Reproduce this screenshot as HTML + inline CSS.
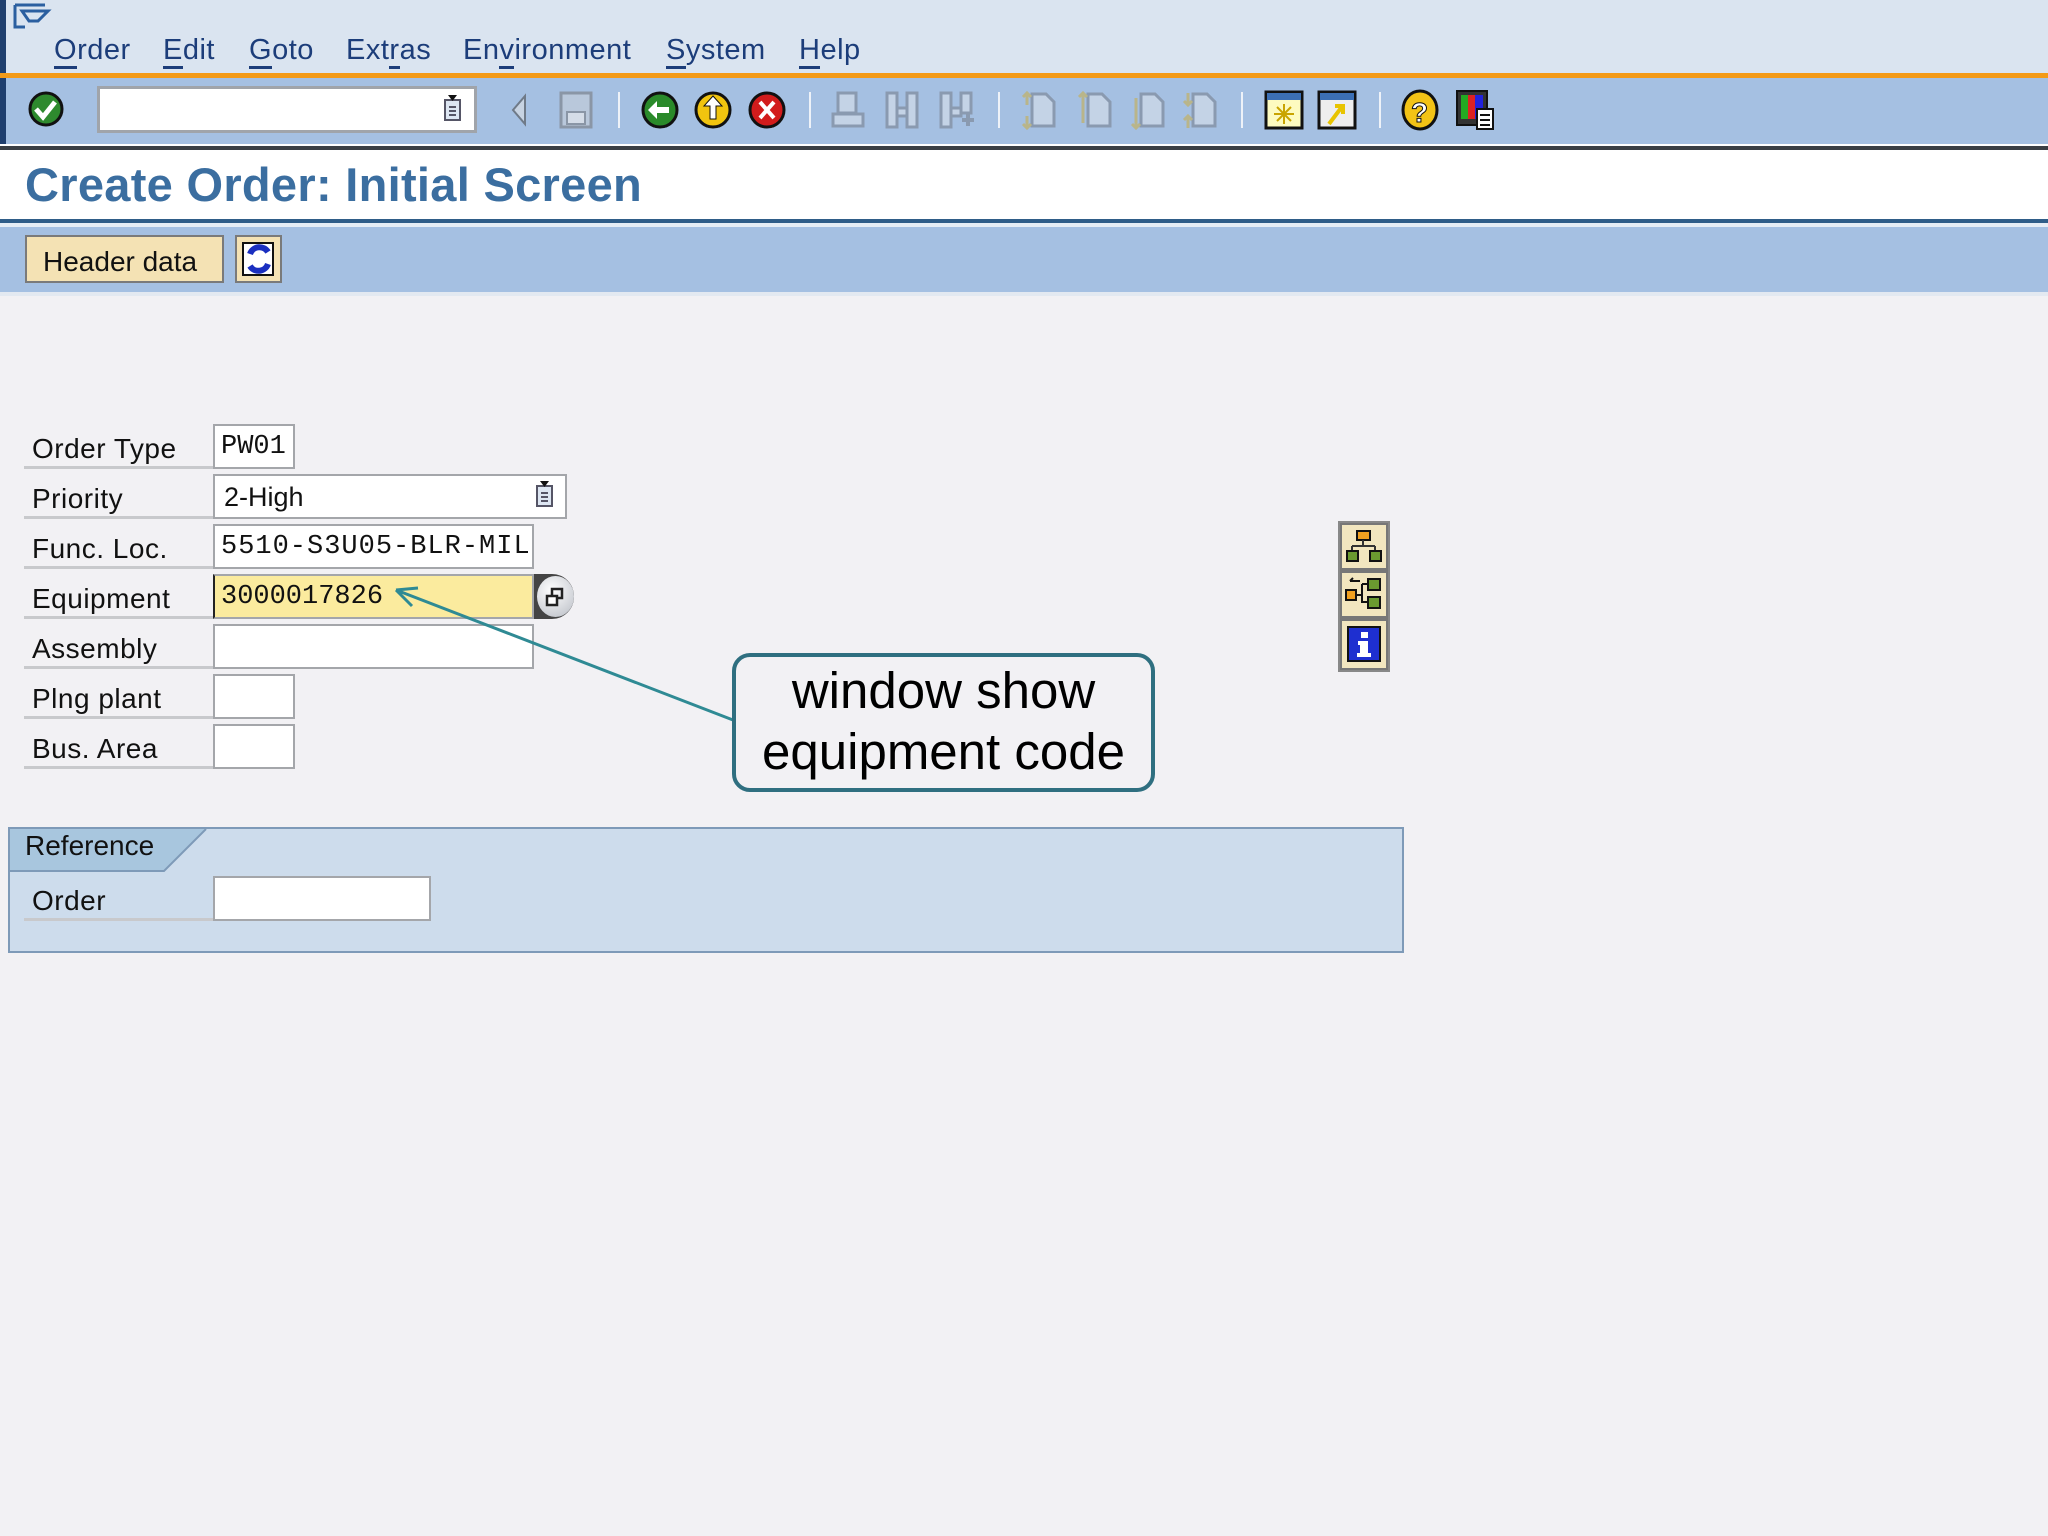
<!DOCTYPE html>
<html><head><meta charset="utf-8"><style>
*{margin:0;padding:0;box-sizing:border-box}
body{width:2048px;height:1536px;background:#f2f1f4;position:relative;overflow:hidden;font-family:"Liberation Sans",sans-serif}
.a{position:absolute}
.menu span{position:absolute;top:34px;font-size:29px;color:#1c3d7a;letter-spacing:0.5px}
.menu span u{text-decoration:none;border-bottom:3px solid #1c3d7a}
.lbl{position:absolute;left:24px;width:190px;height:45px;border-bottom:3px solid #c8c9cc;font-size:28px;color:#111;padding:9px 0 0 8px;letter-spacing:0.5px}
.inp{position:absolute;left:213px;height:45px;background:#fff;border:2px solid #a4a6aa;font-family:"Liberation Mono",monospace;font-size:27px;color:#111;padding:6px 0 0 6px}
.sep{position:absolute;top:92px;width:2px;height:36px;background:#eef2f8}
</style></head><body>
<div class="a" style="left:0;top:0;width:2048px;height:74px;background:#dae4f0"></div>
<div class="a" style="left:0;top:0;width:6px;height:148px;background:#1f3f6e"></div>
<svg class="a" style="left:12px;top:2px" width="42" height="28"><path d="M3 3h30M3 3v22h10M10 9h26l-10 10h-9z" fill="none" stroke="#2b5fa0" stroke-width="3"/></svg>
<div class="menu">
<span style="left:54px"><u>O</u>rder</span>
<span style="left:163px"><u>E</u>dit</span>
<span style="left:249px"><u>G</u>oto</span>
<span style="left:346px">Ext<u>r</u>as</span>
<span style="left:463px">En<u>v</u>ironment</span>
<span style="left:666px"><u>S</u>ystem</span>
<span style="left:799px"><u>H</u>elp</span>
</div>
<div class="a" style="left:0;top:73px;width:2048px;height:5px;background:#f39a17"></div>
<div class="a" style="left:6px;top:78px;width:2042px;height:66px;background:#a5c0e2"></div>
<div class="a" style="left:0;top:144px;width:2048px;height:2px;background:#fff"></div>
<div class="a" style="left:0;top:146px;width:2048px;height:4px;background:#3a3f45"></div>
<svg class="a" style="left:26px;top:90px" width="44" height="40"><circle cx="20" cy="19" r="16" fill="#2e8a2e" stroke="#111" stroke-width="3"/><path d="M10 19l7 8 12-15" fill="none" stroke="#fff" stroke-width="5"/></svg>
<div class="a" style="left:97px;top:86px;width:380px;height:47px;background:#fff;border:3px solid #a0a4aa"></div>
<svg class="a" style="left:442px;top:94px" width="22" height="30"><rect x="3" y="6" width="15" height="20" fill="#dde6f2" stroke="#556" stroke-width="2"/><path d="M6 1h9l-4.5 6z" fill="#111"/><path d="M7 13h7M7 17h7M7 21h7" stroke="#556" stroke-width="2"/></svg>
<svg class="a" style="left:510px;top:92px" width="20" height="36"><path d="M15 4v28L3 18z" fill="#c7d3e2" stroke="#6f7a88" stroke-width="2"/></svg>
<svg class="a" style="left:558px;top:90px" width="36" height="40"><rect x="3" y="3" width="30" height="34" fill="#b9c8db" stroke="#8a96a6" stroke-width="3"/><rect x="9" y="22" width="18" height="12" fill="#d5dde8" stroke="#8a96a6" stroke-width="2"/></svg>
<div class="sep" style="left:618px"></div>
<svg class="a" style="left:640px;top:89px" width="40" height="42"><circle cx="20" cy="21" r="17" fill="#2a8a2a" stroke="#111" stroke-width="3"/><path d="M8 21l9-9v6h12v6H17v6z" fill="#fff"/></svg>
<svg class="a" style="left:693px;top:89px" width="40" height="42"><circle cx="20" cy="21" r="17" fill="#f1c40f" stroke="#111" stroke-width="3"/><path d="M20 7l9 10h-6v13h-6V17h-6z" fill="#fff" stroke="#111" stroke-width="1"/></svg>
<svg class="a" style="left:747px;top:89px" width="40" height="42"><circle cx="20" cy="21" r="17" fill="#d21c1c" stroke="#111" stroke-width="3"/><path d="M13 13l14 16M27 13L13 29" stroke="#fff" stroke-width="4"/></svg>
<div class="sep" style="left:809px"></div>
<svg class="a" style="left:830px;top:90px" width="36" height="40"><path d="M8 3h18v20H8zM3 24h30v12H3z" fill="#c4d3e6" stroke="#8a9ab0" stroke-width="3"/></svg>
<svg class="a" style="left:884px;top:90px" width="36" height="40"><path d="M3 3h10v34H3zM23 3h10v34H23zM13 18h10v8H13z" fill="#c4d3e6" stroke="#8a9ab0" stroke-width="3"/></svg>
<svg class="a" style="left:938px;top:90px" width="40" height="40"><path d="M3 3h10v34H3zM23 3h10v20H23zM13 18h10v8H13z" fill="#c4d3e6" stroke="#8a9ab0" stroke-width="3"/><path d="M30 24v12M24 30h12" stroke="#8a9ab0" stroke-width="4"/></svg>
<div class="sep" style="left:998px"></div>
<svg class="a" style="left:1020px;top:90px" width="38" height="40"><path d="M12 4h14l8 8v24H12z" fill="#c4d3e6" stroke="#8a9ab0" stroke-width="3"/><path d="M7 3v12M3 7l4-4 4 4M7 26v12M3 34l4 4 4-4" stroke="#b9b58a" stroke-width="3" fill="none"/></svg>
<svg class="a" style="left:1076px;top:90px" width="38" height="40"><path d="M12 4h14l8 8v24H12z" fill="#c4d3e6" stroke="#8a9ab0" stroke-width="3"/><path d="M7 3v30M3 7l4-4 4 4" stroke="#b9b58a" stroke-width="3" fill="none"/></svg>
<svg class="a" style="left:1129px;top:90px" width="38" height="40"><path d="M12 4h14l8 8v24H12z" fill="#c4d3e6" stroke="#8a9ab0" stroke-width="3"/><path d="M7 8v30M3 34l4 4 4-4" stroke="#b9b58a" stroke-width="3" fill="none"/></svg>
<svg class="a" style="left:1181px;top:90px" width="38" height="40"><path d="M12 4h14l8 8v24H12z" fill="#c4d3e6" stroke="#8a9ab0" stroke-width="3"/><path d="M7 3v12M3 11l4 4 4-4M7 26v12M3 30l4-4 4 4" stroke="#b9b58a" stroke-width="3" fill="none"/></svg>
<div class="sep" style="left:1241px"></div>
<svg class="a" style="left:1264px;top:90px" width="40" height="40"><rect x="2" y="2" width="36" height="36" fill="#fdfbc0" stroke="#111" stroke-width="3"/><rect x="3" y="3" width="34" height="7" fill="#3c6fb4"/><path d="M20 14v20M10 24h20M13 17l14 14M27 17L13 31" stroke="#c9a400" stroke-width="2"/></svg>
<svg class="a" style="left:1317px;top:90px" width="40" height="40"><rect x="2" y="2" width="36" height="36" fill="#eee" stroke="#111" stroke-width="3"/><rect x="3" y="3" width="34" height="7" fill="#3c6fb4"/><path d="M12 34l12-16M18 16h8v8" stroke="#e8c400" stroke-width="4" fill="none"/></svg>
<div class="sep" style="left:1379px"></div>
<svg class="a" style="left:1400px;top:88px" width="40" height="44"><ellipse cx="20" cy="22" rx="17" ry="19" fill="#f3c316" stroke="#111" stroke-width="3"/><text x="11" y="34" font-size="28" font-weight="bold" font-family="Liberation Sans" fill="#fff" stroke="#111" stroke-width="1">?</text></svg>
<svg class="a" style="left:1455px;top:89px" width="40" height="42"><rect x="2" y="2" width="30" height="34" fill="#333" stroke="#111" stroke-width="2"/><rect x="6" y="6" width="7" height="24" fill="#2a2"/><rect x="13" y="6" width="7" height="24" fill="#d22"/><rect x="20" y="6" width="8" height="24" fill="#22d"/><rect x="22" y="20" width="16" height="20" fill="#fff" stroke="#111" stroke-width="2"/><path d="M25 26h10M25 31h10M25 36h10" stroke="#111" stroke-width="2"/></svg>
<div class="a" style="left:0;top:150px;width:2048px;height:70px;background:#fff"></div>
<div class="a" style="left:25px;top:157px;font-size:47px;font-weight:bold;color:#3b6ea0;letter-spacing:0.3px">Create Order: Initial Screen</div>
<div class="a" style="left:0;top:219px;width:2048px;height:4px;background:#2f5d88"></div>
<div class="a" style="left:0;top:223px;width:2048px;height:4px;background:#e6edf5"></div>
<div class="a" style="left:0;top:227px;width:2048px;height:65px;background:#a5c0e2"></div>
<div class="a" style="left:0;top:292px;width:2048px;height:4px;background:#e3e9f1"></div>
<div class="a" style="left:25px;top:235px;width:199px;height:48px;background:#f4e2b4;border:2px solid #7a7a7a;font-size:28px;color:#111;padding:9px 0 0 16px">Header data</div>
<div class="a" style="left:235px;top:235px;width:47px;height:48px;background:#f4e2b4;border:2px solid #7a7a7a"></div>
<svg class="a" style="left:240px;top:240px" width="38" height="38"><rect x="3" y="3" width="30" height="32" fill="#fff" stroke="#111" stroke-width="2"/><path d="M28 12a10 10 0 0 0-18 2M10 26a10 10 0 0 0 18-2" fill="none" stroke="#1a2fc0" stroke-width="6"/></svg>
<div class="lbl" style="top:424px">Order Type</div>
<div class="inp" style="top:424px;width:82px">PW01</div>
<div class="lbl" style="top:474px">Priority</div>
<div class="inp" style="top:474px;width:354px;font-family:'Liberation Sans',sans-serif;padding-left:9px">2-High</div>
<svg class="a" style="left:534px;top:480px" width="22" height="30"><rect x="3" y="6" width="15" height="20" fill="#dde6f2" stroke="#556" stroke-width="2"/><path d="M6 1h9l-4.5 6z" fill="#111"/><path d="M7 13h7M7 17h7M7 21h7" stroke="#556" stroke-width="2"/></svg>
<div class="lbl" style="top:524px">Func. Loc.</div>
<div class="inp" style="top:524px;width:321px;letter-spacing:1px">5510-S3U05-BLR-MIL</div>
<div class="lbl" style="top:574px">Equipment</div>
<div class="inp" style="top:574px;width:321px;background:#fbeb9e;border-left:2px solid #222">3000017826</div>
<div class="a" style="left:534px;top:574px;width:40px;height:45px;background:#444;border-radius:0 22px 22px 0"></div>
<div class="a" style="left:537px;top:576px;width:37px;height:41px;background:radial-gradient(circle at 40% 35%,#fff,#b8bcc4);border-radius:50%"></div>
<svg class="a" style="left:544px;top:586px" width="22" height="22"><rect x="8" y="3" width="10" height="9" fill="none" stroke="#222" stroke-width="2.5"/><rect x="3" y="10" width="10" height="9" fill="#fff" stroke="#222" stroke-width="2.5"/></svg>
<div class="lbl" style="top:624px">Assembly</div>
<div class="inp" style="top:624px;width:321px"></div>
<div class="lbl" style="top:674px">Plng plant</div>
<div class="inp" style="top:674px;width:82px"></div>
<div class="lbl" style="top:724px">Bus. Area</div>
<div class="inp" style="top:724px;width:82px"></div>
<div class="a" style="left:8px;top:827px;width:1396px;height:126px;background:#cddcec;border:2px solid #7e9ab8"></div>
<svg class="a" style="left:10px;top:829px" width="200" height="44"><path d="M0 0h196l-42 42H0z" fill="#a8c6de"/><path d="M196 0l-42 42H0" fill="none" stroke="#7e9ab8" stroke-width="2"/></svg>
<div class="a" style="left:25px;top:830px;font-size:28px;color:#111">Reference</div>
<div class="lbl" style="top:876px">Order</div>
<div class="inp" style="top:876px;width:218px"></div>
<div class="a" style="left:1338px;top:521px;width:52px;height:151px;background:#777;border:2px solid #888"></div>
<div class="a" style="left:1342px;top:525px;width:44px;height:43px;background:#f2e6bf"></div>
<div class="a" style="left:1342px;top:573px;width:44px;height:43px;background:#f2e6bf"></div>
<div class="a" style="left:1342px;top:621px;width:44px;height:47px;background:#f2e6bf"></div>
<svg class="a" style="left:1342px;top:525px" width="44" height="43"><rect x="15" y="6" width="13" height="9" fill="#f0a020" stroke="#111" stroke-width="2"/><path d="M21 15v6M10 21h23M10 21v5M33 21v5" stroke="#333" stroke-width="2" fill="none"/><rect x="5" y="26" width="11" height="10" fill="#6a9a30" stroke="#111" stroke-width="2"/><rect x="28" y="26" width="11" height="10" fill="#6a9a30" stroke="#111" stroke-width="2"/></svg>
<svg class="a" style="left:1342px;top:573px" width="44" height="43"><rect x="26" y="6" width="12" height="11" fill="#6a9a30" stroke="#111" stroke-width="2"/><rect x="26" y="24" width="12" height="11" fill="#6a9a30" stroke="#111" stroke-width="2"/><rect x="4" y="17" width="10" height="10" fill="#f0a020" stroke="#111" stroke-width="2"/><path d="M14 22h6M20 11v18h6M20 11h6M8 8h10M8 8l3-3" stroke="#111" stroke-width="2" fill="none"/></svg>
<svg class="a" style="left:1342px;top:621px" width="44" height="47"><rect x="6" y="6" width="32" height="34" fill="#1e2fd0" stroke="#111" stroke-width="2"/><rect x="19" y="11" width="7" height="6" fill="#fff"/><path d="M16 20h10v12h3v4H15v-4h3v-8h-2z" fill="#fff"/></svg>
<svg class="a" style="left:0;top:0" width="2048" height="1536"><path d="M733 720L396 590M396 590l16 16M396 590l22-2" stroke="#2f8a94" stroke-width="3" fill="none"/></svg>
<div class="a" style="left:732px;top:653px;width:423px;height:139px;border:4px solid #2f6f80;border-radius:18px;background:#f2f1f4"></div>
<div class="a" style="left:732px;top:660px;width:423px;text-align:center;font-size:51px;line-height:61px;color:#000">window show<br>equipment code</div>
</body></html>
